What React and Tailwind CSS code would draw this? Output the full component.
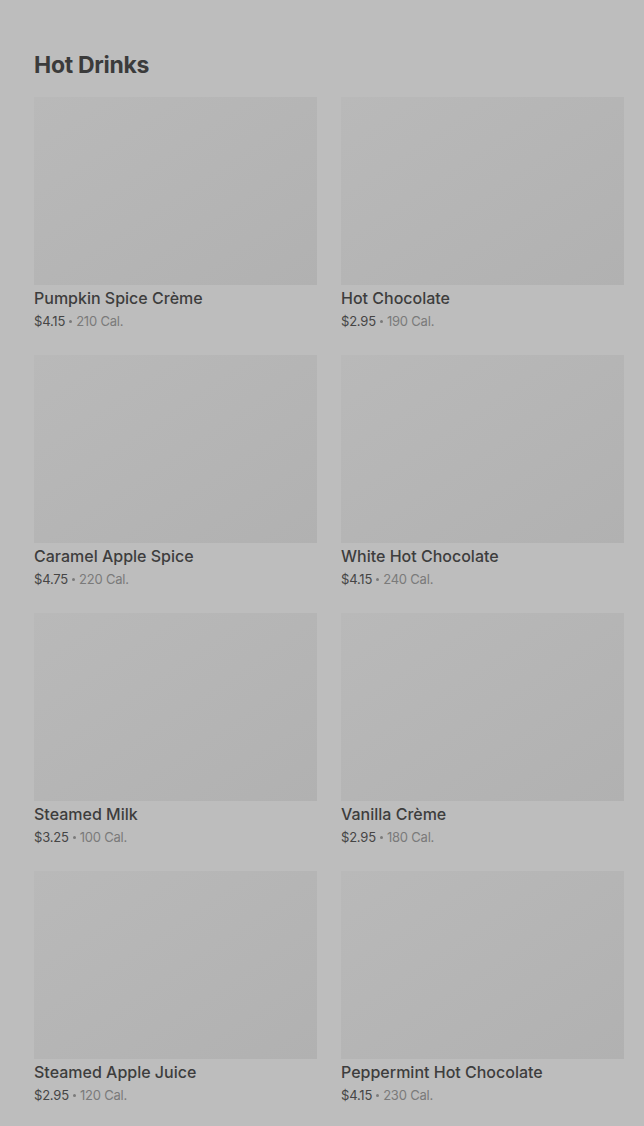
import React from 'react';

const drinks = [
  { name: 'Pumpkin Spice Crème', price: '$4.15', cal: '210 Cal.' },
  { name: 'Hot Chocolate', price: '$2.95', cal: '190 Cal.' },
  { name: 'Caramel Apple Spice', price: '$4.75', cal: '220 Cal.' },
  { name: 'White Hot Chocolate', price: '$4.15', cal: '240 Cal.' },
  { name: 'Steamed Milk', price: '$3.25', cal: '100 Cal.' },
  { name: 'Vanilla Crème', price: '$2.95', cal: '180 Cal.' },
  { name: 'Steamed Apple Juice', price: '$2.95', cal: '120 Cal.' },
  { name: 'Peppermint Hot Chocolate', price: '$4.15', cal: '230 Cal.' },
];

export default function App() {
  return (
    <div
      className="min-h-screen bg-[#bdbdbd] pl-[34px] pr-[20px] pt-[50px] pb-8"
      style={{ fontFamily: 'Inter, "Noto Sans", sans-serif' }}
    >
      <h1 className="text-[23px] leading-[30px] font-bold text-[#3b3b3b] tracking-[-0.3px] mb-[17px]">Hot Drinks</h1>

      <div className="grid grid-cols-2 gap-x-[24px] gap-y-[25px]">
        {drinks.map((d, i) => (
          <div key={i}>
            <div className="h-[188px] bg-gradient-to-br from-[#b9b9b9] to-[#b1b1b1]" />
            <p className="mt-[3px] text-[16px] leading-[20px] font-medium text-[#3d3d3d]">{d.name}</p>
            <p className="mt-[4px] h-[18px] flex items-center gap-[4px] text-[13px] leading-[18px] text-[#7a7a7a] tracking-[-0.2px]">
              <span className="text-[#454545]">{d.price}</span>
              <span className="w-[3px] h-[3px] rounded-full bg-[#7a7a7a]" />
              <span>{d.cal}</span>
            </p>
          </div>
        ))}
      </div>
    </div>
  );
}
